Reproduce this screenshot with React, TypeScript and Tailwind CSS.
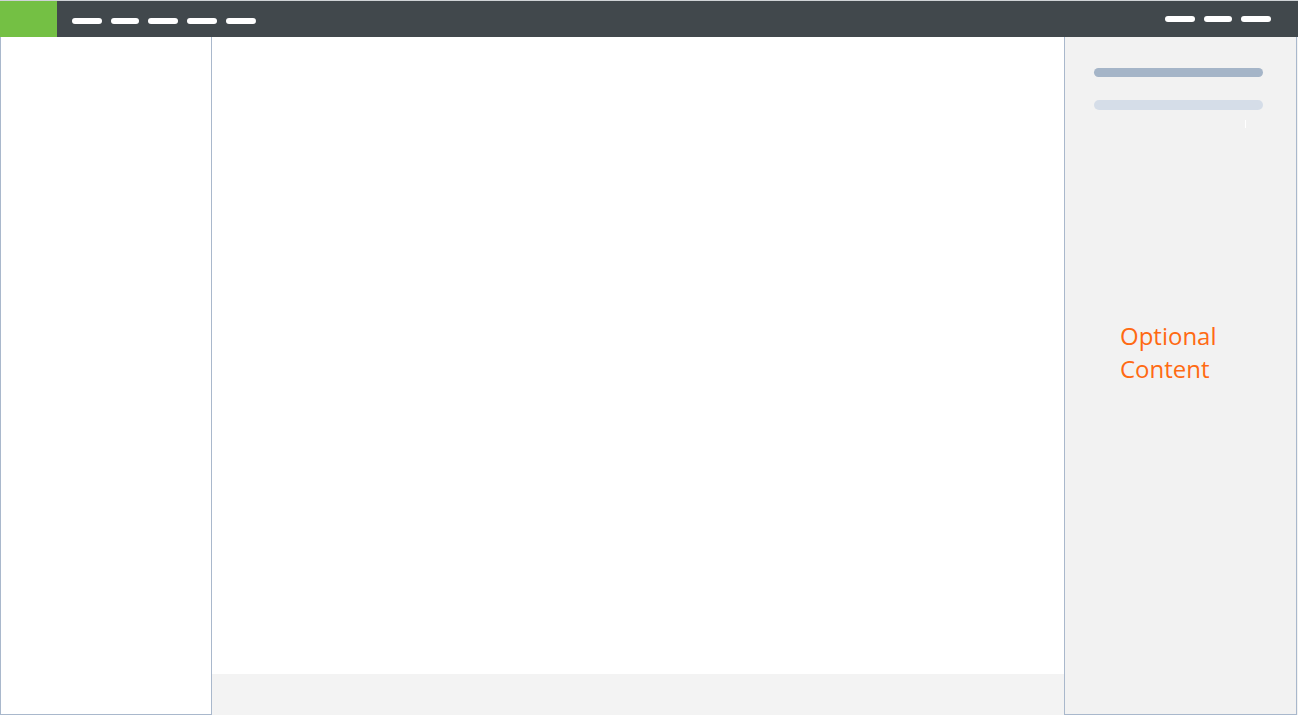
export default function App() {
  const leftDashes = ['w-[30px]', 'w-[28px]', 'w-[30px]', 'w-[30px]', 'w-[30px]'];
  const rightDashes = ['w-[30px]', 'w-[28px]', 'w-[30px]'];

  return (
    <div className="flex h-[716px] w-[1298px] flex-col overflow-hidden bg-white font-['Open_Sans',sans-serif]">
      {/* top bar */}
      <div className="h-px bg-[#cfd3d6]" />
      <header className="flex h-[36px] items-center bg-[#41484c] pr-[27px]">
        <div className="h-full w-[57px] bg-[#74c044]" />
        <nav className="ml-[15px] mt-[3px] flex gap-[9px]">
          {leftDashes.map((w, i) => (
            <span key={i} className={`h-[6px] ${w} rounded-full bg-white`} />
          ))}
        </nav>
        <div className="ml-auto mb-[1px] flex gap-[9px]">
          {rightDashes.map((w, i) => (
            <span key={i} className={`h-[6px] ${w} rounded-full bg-white`} />
          ))}
        </div>
      </header>

      {/* body */}
      <div className="flex min-h-0 flex-1 pb-px">
        <aside className="w-[212px] border-x border-b border-[#a9b8cc] bg-white" />

        <main className="flex flex-1 flex-col">
          <div className="flex-1 bg-white" />
          <div className="h-[41px] bg-[#f3f3f3]" />
        </main>

        <aside className="flex w-[233px] flex-col border-x border-b border-[#a9b8cc] bg-[#f2f2f2] pl-[29px] pr-[33px] pt-[31px]">
          <div className="h-[9px] rounded-full bg-[#a5b5c8]" />
          <div className="mt-[23px] h-[10px] rounded-full bg-[#d5dde8]" />
          <div className="mt-[10px] ml-[151px] h-[8px] w-px bg-white" />
          <p className="ml-[26px] mt-[191px] text-[24px] leading-[33px] text-[#ff6a13]">
            Optional
            <br />
            Content
          </p>
        </aside>
        <div className="w-px bg-[#f2f2f2]" />
      </div>
    </div>
  );
}
